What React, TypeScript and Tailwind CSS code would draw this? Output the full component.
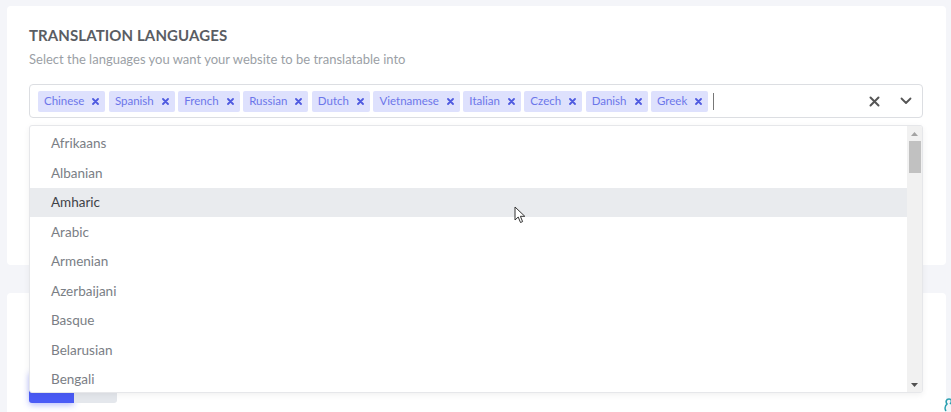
import React from "react";

const selected = ["Chinese", "Spanish", "French", "Russian", "Dutch", "Vietnamese", "Italian", "Czech", "Danish", "Greek"];
const options = ["Afrikaans", "Albanian", "Amharic", "Arabic", "Armenian", "Azerbaijani", "Basque", "Belarusian", "Bengali"];

const TagX = () => (
  <svg width="7" height="7" viewBox="0 0 7 7" className="shrink-0">
    <path d="M1 1 L6 6 M6 1 L1 6" stroke="#4f5ae0" strokeWidth="1.8" strokeLinecap="round" />
  </svg>
);

const Tag = ({ label }: { label: string }) => (
  <div className="flex items-center h-[21px] bg-[#dee1fd] rounded-[2px] pl-[6px] pr-[6px] gap-[8px] text-[11.5px] text-[#6c76ea]">
    <span>{label}</span>
    <TagX />
  </div>
);

export default function App() {
  return (
    <div
      className="relative w-[951px] h-[412px] overflow-hidden bg-[#f4f5f9] pl-[7px] pt-[6px]"
      style={{ fontFamily: "Lato, 'Noto Sans', sans-serif" }}
    >
      {/* card 1 */}
      <div className="relative w-[939px] h-[259px] bg-white rounded-[4px] pl-[22px] pr-[23px] pt-[20px]">
        <h2 className="text-[15px] font-bold tracking-[0.1px] text-[#5a5d63] leading-[18px]">TRANSLATION LANGUAGES</h2>
        <p className="mt-[6px] text-[13px] text-[#9b9fa6] leading-[18px]">
          Select the languages you want your website to be translatable into
        </p>
        <div className="mt-[16px] h-[34px] border border-[#dcdee2] rounded-[4px] flex items-center pl-[8px]">
          <div className="flex items-center gap-[3.5px] flex-1">
            {selected.map((s) => (
              <Tag key={s} label={s} />
            ))}
            <div className="ml-[1px] w-px h-[17px] bg-[#777]" />
          </div>
          <div className="flex items-center pr-[10px] gap-[20px]">
            <svg width="11" height="11" viewBox="0 0 11 11">
              <path d="M1.5 1.5 L9.5 9.5 M9.5 1.5 L1.5 9.5" stroke="#555" strokeWidth="2" strokeLinecap="round" />
            </svg>
            <svg width="12" height="8" viewBox="0 0 12 8">
              <path d="M1.5 1.5 L6 6 L10.5 1.5" stroke="#555" strokeWidth="1.8" fill="none" strokeLinecap="round" strokeLinejoin="round" />
            </svg>
          </div>
        </div>

        {/* dropdown */}
        <div className="absolute z-10 left-[22px] top-[119px] w-[894px] h-[268px] bg-white border border-[#e6e7ea] rounded-[3px] shadow-[0_2px_6px_rgba(0,0,0,0.06)] flex overflow-hidden">
          <div className="flex-1 pt-[2.5px]">
            {options.map((o) => (
              <div
                key={o}
                className={`h-[29.5px] flex items-center pl-[21px] text-[13.5px] ${
                  o === "Amharic" ? "bg-[#e9ebee] text-[#3f4247]" : "text-[#7a7e85]"
                }`}
              >
                {o}
              </div>
            ))}
          </div>
          <div className="w-[15px] h-full bg-[#f1f1f1] flex flex-col items-center">
            <div className="h-[15px] flex items-center justify-center">
              <svg width="7" height="4" viewBox="0 0 7 4">
                <path d="M0 4 L3.5 0 L7 4 Z" fill="#a3a3a3" />
              </svg>
            </div>
            <div className="w-[12px] h-[32px] bg-[#c1c1c1]" />
            <div className="flex-1" />
            <div className="h-[15px] flex items-center justify-center">
              <svg width="7" height="4" viewBox="0 0 7 4">
                <path d="M0 0 L3.5 4 L7 0 Z" fill="#505050" />
              </svg>
            </div>
          </div>
        </div>
      </div>

      {/* card 2 */}
      <div className="mt-[28px] w-[939px] h-[200px] bg-white rounded-[4px] pl-[22px] pt-[78px]">
        <div className="flex">
          <div className="w-[45px] h-[32px] bg-[#4a5bf6] rounded-l-[3px] shadow-[0_2px_6px_rgba(74,91,246,0.4)]" />
          <div className="w-[43px] h-[32px] bg-[#e4e7ec] rounded-r-[3px]" />
        </div>
      </div>

      {/* teal widget corner */}
      <svg className="absolute left-[944px] top-[398px]" width="10" height="14" viewBox="0 0 10 14">
        <path d="M5 1 C2 1 1.5 4 3 6 C1 8 0.5 11 2 13 M5 1 C8 1 8 4 6 6" stroke="#2a9fb0" strokeWidth="1.6" fill="none" />
      </svg>

      {/* mouse pointer */}
      <svg className="absolute z-20 left-[514px] top-[206px]" width="13" height="18" viewBox="0 0 13 18">
        <path d="M1 1 L1 14 L4.2 11 L6.5 16.5 L8.6 15.6 L6.4 10.3 L10.8 10.3 Z" fill="#fff" stroke="#333" strokeWidth="1" strokeLinejoin="round" />
      </svg>
    </div>
  );
}
